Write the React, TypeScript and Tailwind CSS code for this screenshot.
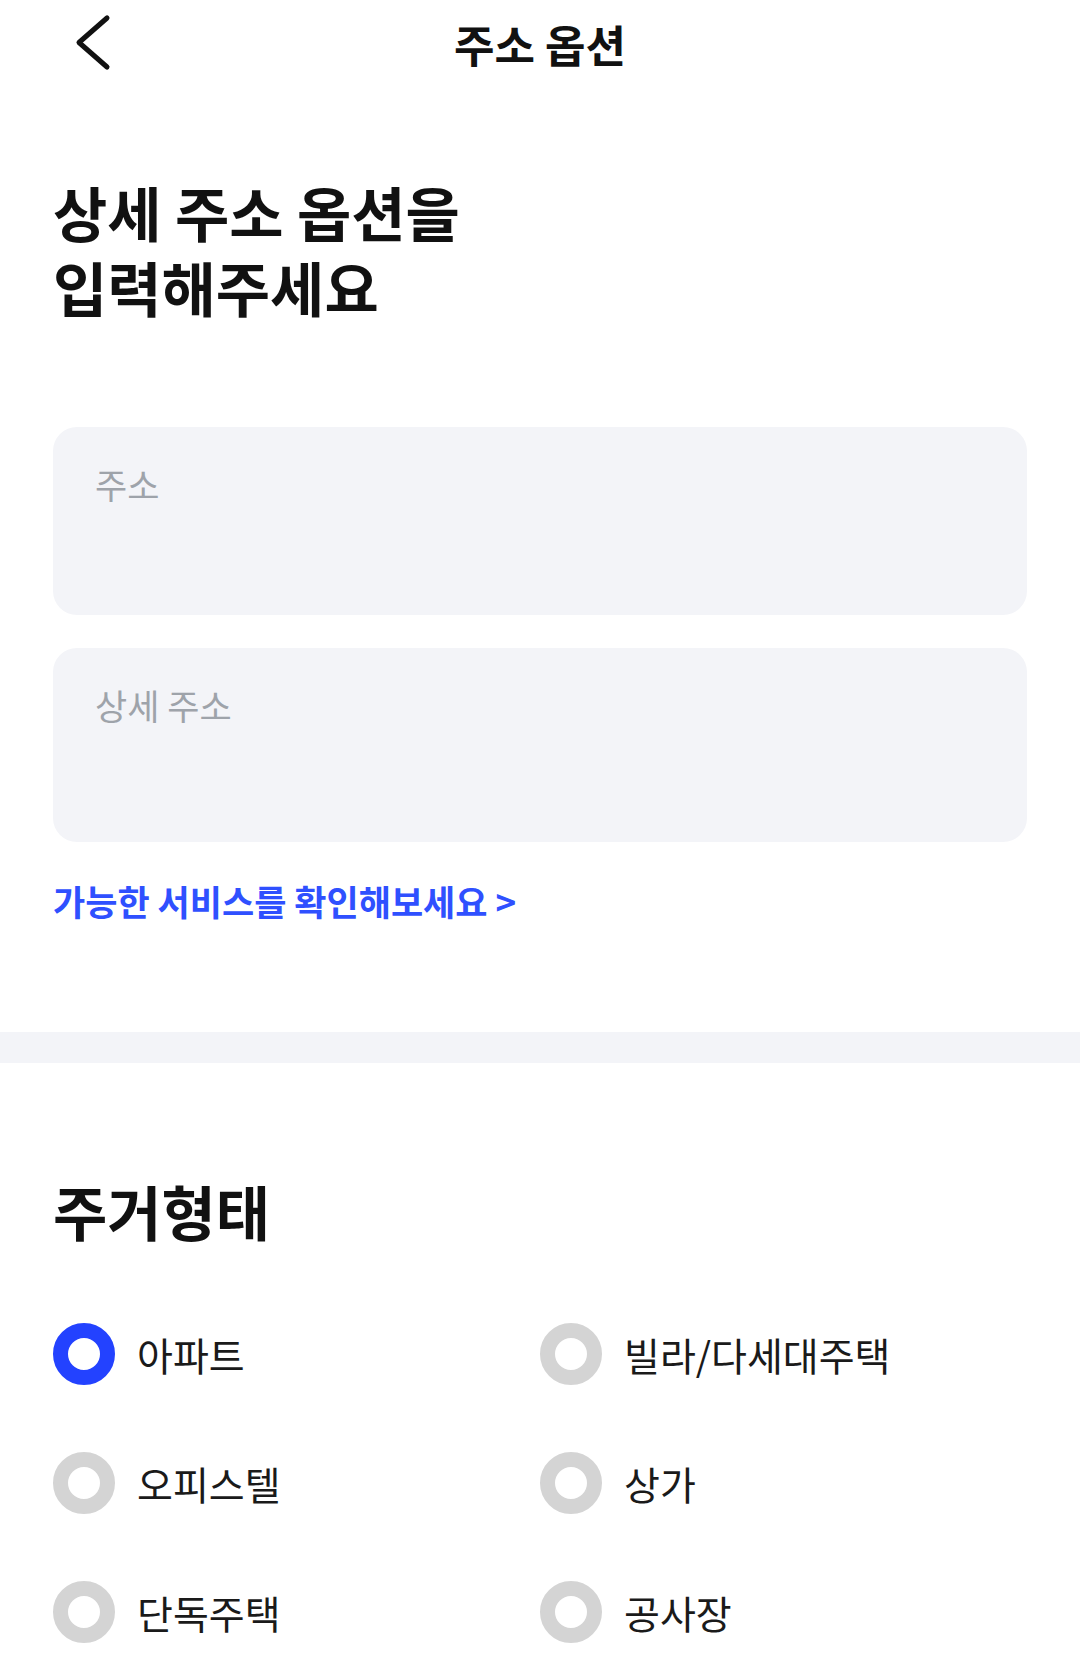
import { useState } from "react";

const FONT = { fontFamily: '"Noto Sans CJK KR", "Noto Sans", sans-serif' };

const houseTypes = ["아파트", "빌라/다세대주택", "오피스텔", "상가", "단독주택", "공사장"];

function BackIcon() {
  return (
    <svg width="60" height="64" viewBox="0 0 60 64" fill="none">
      <path
        d="M47 6 L19 30.5 L47 55"
        stroke="#111111"
        strokeWidth="5"
        strokeLinecap="round"
        strokeLinejoin="round"
      />
    </svg>
  );
}

function Radio({ label, checked, onClick }: { label: string; checked: boolean; onClick: () => void }) {
  return (
    <button className="flex h-[62px] items-center gap-[22px] text-left" onClick={onClick}>
      <span
        className={
          checked
            ? "box-border h-[62px] w-[62px] shrink-0 rounded-full border-[15px] border-[#2342ff] bg-white"
            : "box-border h-[62px] w-[62px] shrink-0 rounded-full border-[15px] border-[#d4d4d4] bg-white"
        }
      />
      <span className="text-[39px] leading-[46px] text-[#1a1a1a]">{label}</span>
    </button>
  );
}

export default function App() {
  const [houseType, setHouseType] = useState("아파트");

  return (
    <main className="min-h-[1680px] w-[1080px] bg-white" style={FONT}>
      <header className="grid h-[88px] grid-cols-[1fr_auto_1fr] items-center">
        <button className="ml-[60px] self-center">
          <BackIcon />
        </button>
        <h1 className="text-[44px] font-bold leading-[52px] text-[#111]">주소 옵션</h1>
        <div />
      </header>

      <section className="px-[53px]">
        <h2 className="mt-[86px] flex flex-col text-[59px] font-bold text-[#111]">
          <span className="block h-[75px] leading-[75px]">상세 주소 옵션을</span>
          <span className="block h-[75px] leading-[75px]">입력해주세요</span>
        </h2>

        <div className="mt-[103px] flex flex-col gap-[33px]">
          <div className="h-[188px] rounded-[24px] bg-[#f3f4f8] px-[42px] pt-[36px]">
            <input
              placeholder="주소"
              className="w-full bg-transparent text-[35px] leading-[42px] text-[#111] outline-none placeholder:text-[#9ea3aa]"
            />
          </div>
          <div className="h-[194px] rounded-[24px] bg-[#f3f4f8] px-[42px] pt-[36px]">
            <input
              placeholder="상세 주소"
              className="w-full bg-transparent text-[35px] leading-[42px] text-[#111] outline-none placeholder:text-[#9ea3aa]"
            />
          </div>
        </div>

        <a className="mt-[38px] block text-[35px] font-semibold leading-[42px] text-[#2f50ff]">
          가능한 서비스를 확인해보세요 &gt;
        </a>
      </section>

      <div className="mt-[110px] h-[31px] bg-[#f3f4f8]" />

      <section className="px-[53px]">
        <h2 className="mt-[110px] text-[59px] font-bold leading-[75px] text-[#111]">주거형태</h2>

        <div className="mt-[75px] grid grid-cols-2 gap-y-[67px]">
          {houseTypes.map((t) => (
            <Radio key={t} label={t} checked={houseType === t} onClick={() => setHouseType(t)} />
          ))}
        </div>
      </section>
    </main>
  );
}
